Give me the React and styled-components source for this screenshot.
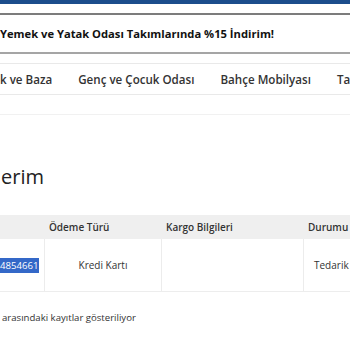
import React from 'react';
import styled, { createGlobalStyle } from 'styled-components';

const GlobalStyle = createGlobalStyle`
  html, body {
    margin: 0;
    padding: 0;
    background: #ffffff;
  }
  body {
    font-family: 'Open Sans', 'Liberation Sans', sans-serif;
    color: #222;
  }
`;

const Page = styled.div`
	width: 350px;
	height: 350px;
	overflow: hidden;
	background: #fff;
	display: flex;
	flex-direction: column;
`;

const TopBar = styled.div`
	height: 4px;
	background: #1c4d8c;
	flex: none;
`;

const Rule = styled.div`
	flex: none;
	height: ${({ size }) => size || 1}px;
	background: ${({ color }) => color || '#e8e8e8'};
	margin-top: ${({ gap }) => gap || 0}px;
`;

const Banner = styled.div`
	height: 37px;
	display: flex;
	align-items: center;
	font-size: 11.2px;
	font-weight: 700;
	color: #111;
	white-space: nowrap;
	flex: none;
`;

const Nav = styled.nav`
	height: 30px;
	display: flex;
	align-items: center;
	white-space: nowrap;
	overflow: hidden;
	flex: none;
`;

const NavItem = styled.span`
	flex: none;
	font-size: 11.6px;
	font-weight: 600;
	color: #333;
	padding-right: 26px;
`;

const Heading = styled.h1`
	margin: 49px 0 0 1px;
	font-size: 20px;
	font-weight: 400;
	color: #222;
	line-height: 26px;
	flex: none;
`;

const Table = styled.div`
	margin-top: 25px;
	display: grid;
	grid-template-columns: 44px 117px 142px 60px;
	width: 363px;
	flex: none;
	border-bottom: 1px solid #ededed;
`;

const HeadCell = styled.div`
	background: #efefef;
	height: 24px;
	display: flex;
	align-items: center;
	padding-left: 5px;
	font-size: 10px;
	font-weight: 600;
	color: #333;
	white-space: nowrap;
`;

const Cell = styled.div`
	height: 52px;
	display: flex;
	align-items: center;
	justify-content: ${({ align }) => align || 'center'};
	padding-left: ${({ pad }) => pad || 0}px;
	font-size: 10px;
	color: #333;
	white-space: nowrap;
	border-left: ${({ first }) => (first ? 'none' : '1px solid #ececec')};
`;

const Selected = styled.span`
	background: #3468c8;
	color: #fff;
	font-size: 9.6px;
	padding: 1px 1px 1px 0;
`;

const Footer = styled.div`
	margin: 19px 0 0 2px;
	font-size: 9.6px;
	color: #333;
	white-space: nowrap;
	flex: none;
`;

const App = () => {
	return (
		<>
			<GlobalStyle />
			<Page>
				<TopBar />
				<Rule size={2} color="#7c7c7c" gap={9} />
				<Banner>Yemek ve Yatak Odası Takımlarında %15 İndirim!</Banner>
				<Rule size={2} color="#a5a5a5" />
				<Rule color="#e9e9e9" gap={9} />
				<Nav>
					<NavItem>k ve Baza</NavItem>
					<NavItem>Genç ve Çocuk Odası</NavItem>
					<NavItem>Bahçe Mobilyası</NavItem>
					<NavItem>Ta</NavItem>
				</Nav>
				<Rule color="#e9e9e9" />
				<Rule color="#f1f1f1" gap={19} />
				<Heading>erim</Heading>
				<Table>
					<HeadCell />
					<HeadCell>Ödeme Türü</HeadCell>
					<HeadCell>Kargo Bilgileri</HeadCell>
					<HeadCell>Durumu</HeadCell>
					<Cell first align="flex-start">
						<Selected>4854661</Selected>
					</Cell>
					<Cell>Kredi Kartı</Cell>
					<Cell />
					<Cell align="flex-start" pad={10}>Tedarik</Cell>
				</Table>
				<Footer>arasındaki kayıtlar gösteriliyor</Footer>
			</Page>
		</>
	);
};

export default App;
